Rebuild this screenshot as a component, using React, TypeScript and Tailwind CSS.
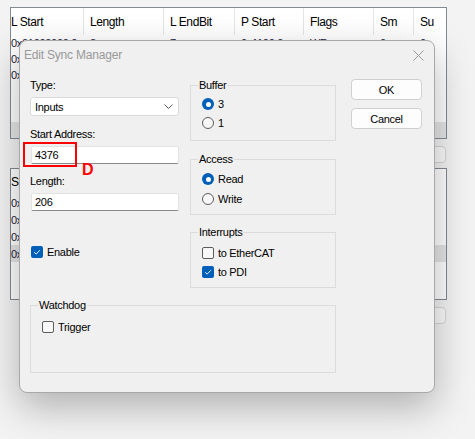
import React from "react";

type CellProps = { children?: React.ReactNode; w: string; first?: boolean };

const headers = ["L Start", "Length", "L EndBit", "P Start", "Flags", "Sm", "Su"];
const widths = ["w-[73px]", "w-[80px]", "w-[71px]", "w-[69px]", "w-[70px]", "w-[40px]", "flex-1"];

const rows1 = [
  ["0x01000000.0", "8", "7", "0x1100.0", "WF", "0", "0"],
  ["0x01000001.0", "8", "7", "0x1101.0", "WF", "0", "0"],
  ["0x01000002.0", "8", "7", "0x1102.0", "WF", "0", "0"],
];

const Cell = ({ children, w, first }: CellProps) => (
  <div className={`${w} h-full flex items-center whitespace-nowrap overflow-hidden ${first ? "pl-0" : "pl-[6px]"}`}>{children}</div>
);

const Radio = ({ on, label }: { on?: boolean; label: string }) => (
  <div className="flex items-center h-[16px] gap-[4px]">
    {on ? (
      <span className="w-[12px] h-[12px] rounded-full bg-[#005fb8] flex items-center justify-center">
        <span className="w-[5px] h-[5px] rounded-full bg-white" />
      </span>
    ) : (
      <span className="w-[12px] h-[12px] rounded-full border border-[#5d5d5d] bg-[#f7f7f7]" />
    )}
    <span>{label}</span>
  </div>
);

const Check = ({ on, label }: { on?: boolean; label: string }) => (
  <div className="flex items-center h-[16px] gap-[4px]">
    {on ? (
      <span className="w-[12px] h-[12px] rounded-[2px] bg-[#005fb8] flex items-center justify-center">
        <svg width="10" height="10" viewBox="0 0 10 10">
          <path d="M2.2 5.2 L4.2 7.1 L7.9 3.2" fill="none" stroke="#ffffff" strokeWidth="0.9" />
        </svg>
      </span>
    ) : (
      <span className="w-[12px] h-[12px] rounded-[2px] border border-[#5d5d5d] bg-[#f7f7f7]" />
    )}
    <span>{label}</span>
  </div>
);

const Group = ({ title, className, children }: { title: string; className: string; children: React.ReactNode }) => (
  <fieldset className={`border border-[#dcdcdc] ${className}`}>
    <legend className="ml-[7px] px-[1px] leading-[16px]">{title}</legend>
    <div className="pl-[11px] flex flex-col">{children}</div>
  </fieldset>
);

const EditBox = ({ value }: { value: string }) => (
  <div className="ml-[1px] w-[148px] h-[18px] bg-white border border-[#e3e3e3] border-b-[#8a8a8a] rounded-[2px] flex items-center pl-[3px]">{value}</div>
);

const DialogButton = ({ label, className }: { label: string; className?: string }) => (
  <button className={`w-[71px] h-[21px] bg-[#fdfdfd] border border-[#d0d0d0] rounded-[4px] flex items-center justify-center ${className ?? ""}`}>{label}</button>
);

export default function App() {
  return (
    <div className="relative w-[475px] h-[439px] overflow-hidden bg-[#f3f3f3] font-['Liberation_Sans',Arial,sans-serif] text-[11px] leading-[16px] tracking-[-0.3px] text-black">
      {/* background window */}
      <div className="pt-[7px] pl-[10px] w-[447px] flex flex-col">
        {/* table 1 */}
        <div className="h-[132px] bg-white border border-[#838a93] flex flex-col">
          <div className="h-[27px] flex text-[12px] tracking-[-0.4px]">
            {headers.map((h, i) => (
              <div key={h} className={`${widths[i]} h-full flex items-center border-r border-[#e5e5e5] last:border-r-0 ${i === 0 ? "pl-0" : "pl-[6px]"}`}>
                {h}
              </div>
            ))}
          </div>
          {rows1.map((r, ri) => (
            <div key={ri} className="h-[16px] flex text-[#1a1a3a]">
              {r.map((c, i) => (
                <Cell key={i} w={widths[i]} first={i === 0}>
                  {c}
                </Cell>
              ))}
            </div>
          ))}
          <div className="mt-auto h-[16px] bg-[#e6e6e6]" />
        </div>

        <div className="mt-[7px] h-[17px] flex justify-end">
          <div className="w-[75px] h-full mr-[1px] bg-[#fbfbfb] border border-[#d6d6d6] rounded-[4px]" />
        </div>

        {/* table 2 */}
        <div className="mt-[5px] h-[132px] bg-white border border-[#838a93] flex flex-col">
          <div className="h-[25px] flex items-center text-[12px] tracking-[-0.4px]">Start</div>
          {["0x1000", "0x1080", "0x1100", "0x1180"].map((r, i) => (
            <div key={r} className={`h-[17px] flex items-center text-[#1a1a3a] ${i === 3 ? "bg-[#e5e5e5]" : ""}`}>
              {r}
            </div>
          ))}
        </div>

        <div className="mt-[7px] h-[17px] flex justify-end">
          <div className="w-[75px] h-full mr-[1px] bg-[#fbfbfb] border border-[#d6d6d6] rounded-[4px]" />
        </div>
      </div>

      {/* Edit Sync Manager dialog */}
      <div className="absolute left-[19px] top-[40px] w-[416px] h-[353px] bg-[#f0f0f0] border border-[#a8a8a8] rounded-[8px] shadow-[0_14px_38px_rgba(0,0,0,0.28)] flex flex-col">
        <div className="h-[28px] flex items-center justify-between pl-[4px]">
          <span className="text-[12px] tracking-[-0.2px] text-[#999999]">Edit Sync Manager</span>
          <svg width="11" height="11" viewBox="0 0 11 11" className="mr-[10px]">
            <path d="M0.5 0.5 L10.5 10.5 M10.5 0.5 L0.5 10.5" stroke="#9a9a9a" strokeWidth="1" />
          </svg>
        </div>

        <div className="flex pl-[10px]">
          <div className="w-[306px] flex flex-col">
            <div className="flex gap-[11px]">
              {/* left column */}
              <div className="w-[149px] flex flex-col">
                <div className="mt-[8px]">Type:</div>
                <div className="mt-[4px] h-[19px] bg-white border border-[#d9d9d9] rounded-[3px] flex items-center justify-between pl-[4px] pr-[5px]">
                  <span>Inputs</span>
                  <svg width="9" height="5" viewBox="0 0 9 5">
                    <path d="M0.5 0.5 L4.5 4.5 L8.5 0.5" fill="none" stroke="#5a5a5a" strokeWidth="1" />
                  </svg>
                </div>
                <div className="mt-[10px]">Start Address:</div>
                <div className="mt-[4px] relative">
                  <EditBox value="4376" />
                  <div className="absolute left-[-7px] top-[-4px] w-[54px] h-[25px] border-2 border-[#ff0000]" />
                  <div className="absolute left-[52px] top-[15px] text-[16px] leading-[18px] font-bold text-[#ff0000] tracking-normal">D</div>
                </div>
                <div className="mt-[9px]">Length:</div>
                <div className="mt-[4px]">
                  <EditBox value="206" />
                </div>
                <div className="mt-[33px] ml-[1px]">
                  <Check on label="Enable" />
                </div>
              </div>

              {/* right column */}
              <div className="w-[146px] flex flex-col">
                <Group title="Buffer" className="mt-[8px] h-[64px]">
                  <div className="mt-[3px]">
                    <Radio on label="3" />
                  </div>
                  <div className="mt-[3px]">
                    <Radio label="1" />
                  </div>
                </Group>
                <Group title="Access" className="mt-[10px] h-[64px]">
                  <div className="mt-[4px]">
                    <Radio on label="Read" />
                  </div>
                  <div className="mt-[4px]">
                    <Radio label="Write" />
                  </div>
                </Group>
                <Group title="Interrupts" className="mt-[9px] h-[64px]">
                  <div className="mt-[5px]">
                    <Check label="to EtherCAT" />
                  </div>
                  <div className="mt-[3px]">
                    <Check on label="to PDI" />
                  </div>
                </Group>
              </div>
            </div>

            <Group title="Watchdog" className="mt-[9px] h-[76px]">
              <div className="mt-[6px]">
                <Check label="Trigger" />
              </div>
            </Group>
          </div>

          {/* buttons */}
          <div className="ml-[15px] flex flex-col">
            <DialogButton label="OK" className="mt-[10px]" />
            <DialogButton label="Cancel" className="mt-[8px]" />
          </div>
        </div>
      </div>
    </div>
  );
}
